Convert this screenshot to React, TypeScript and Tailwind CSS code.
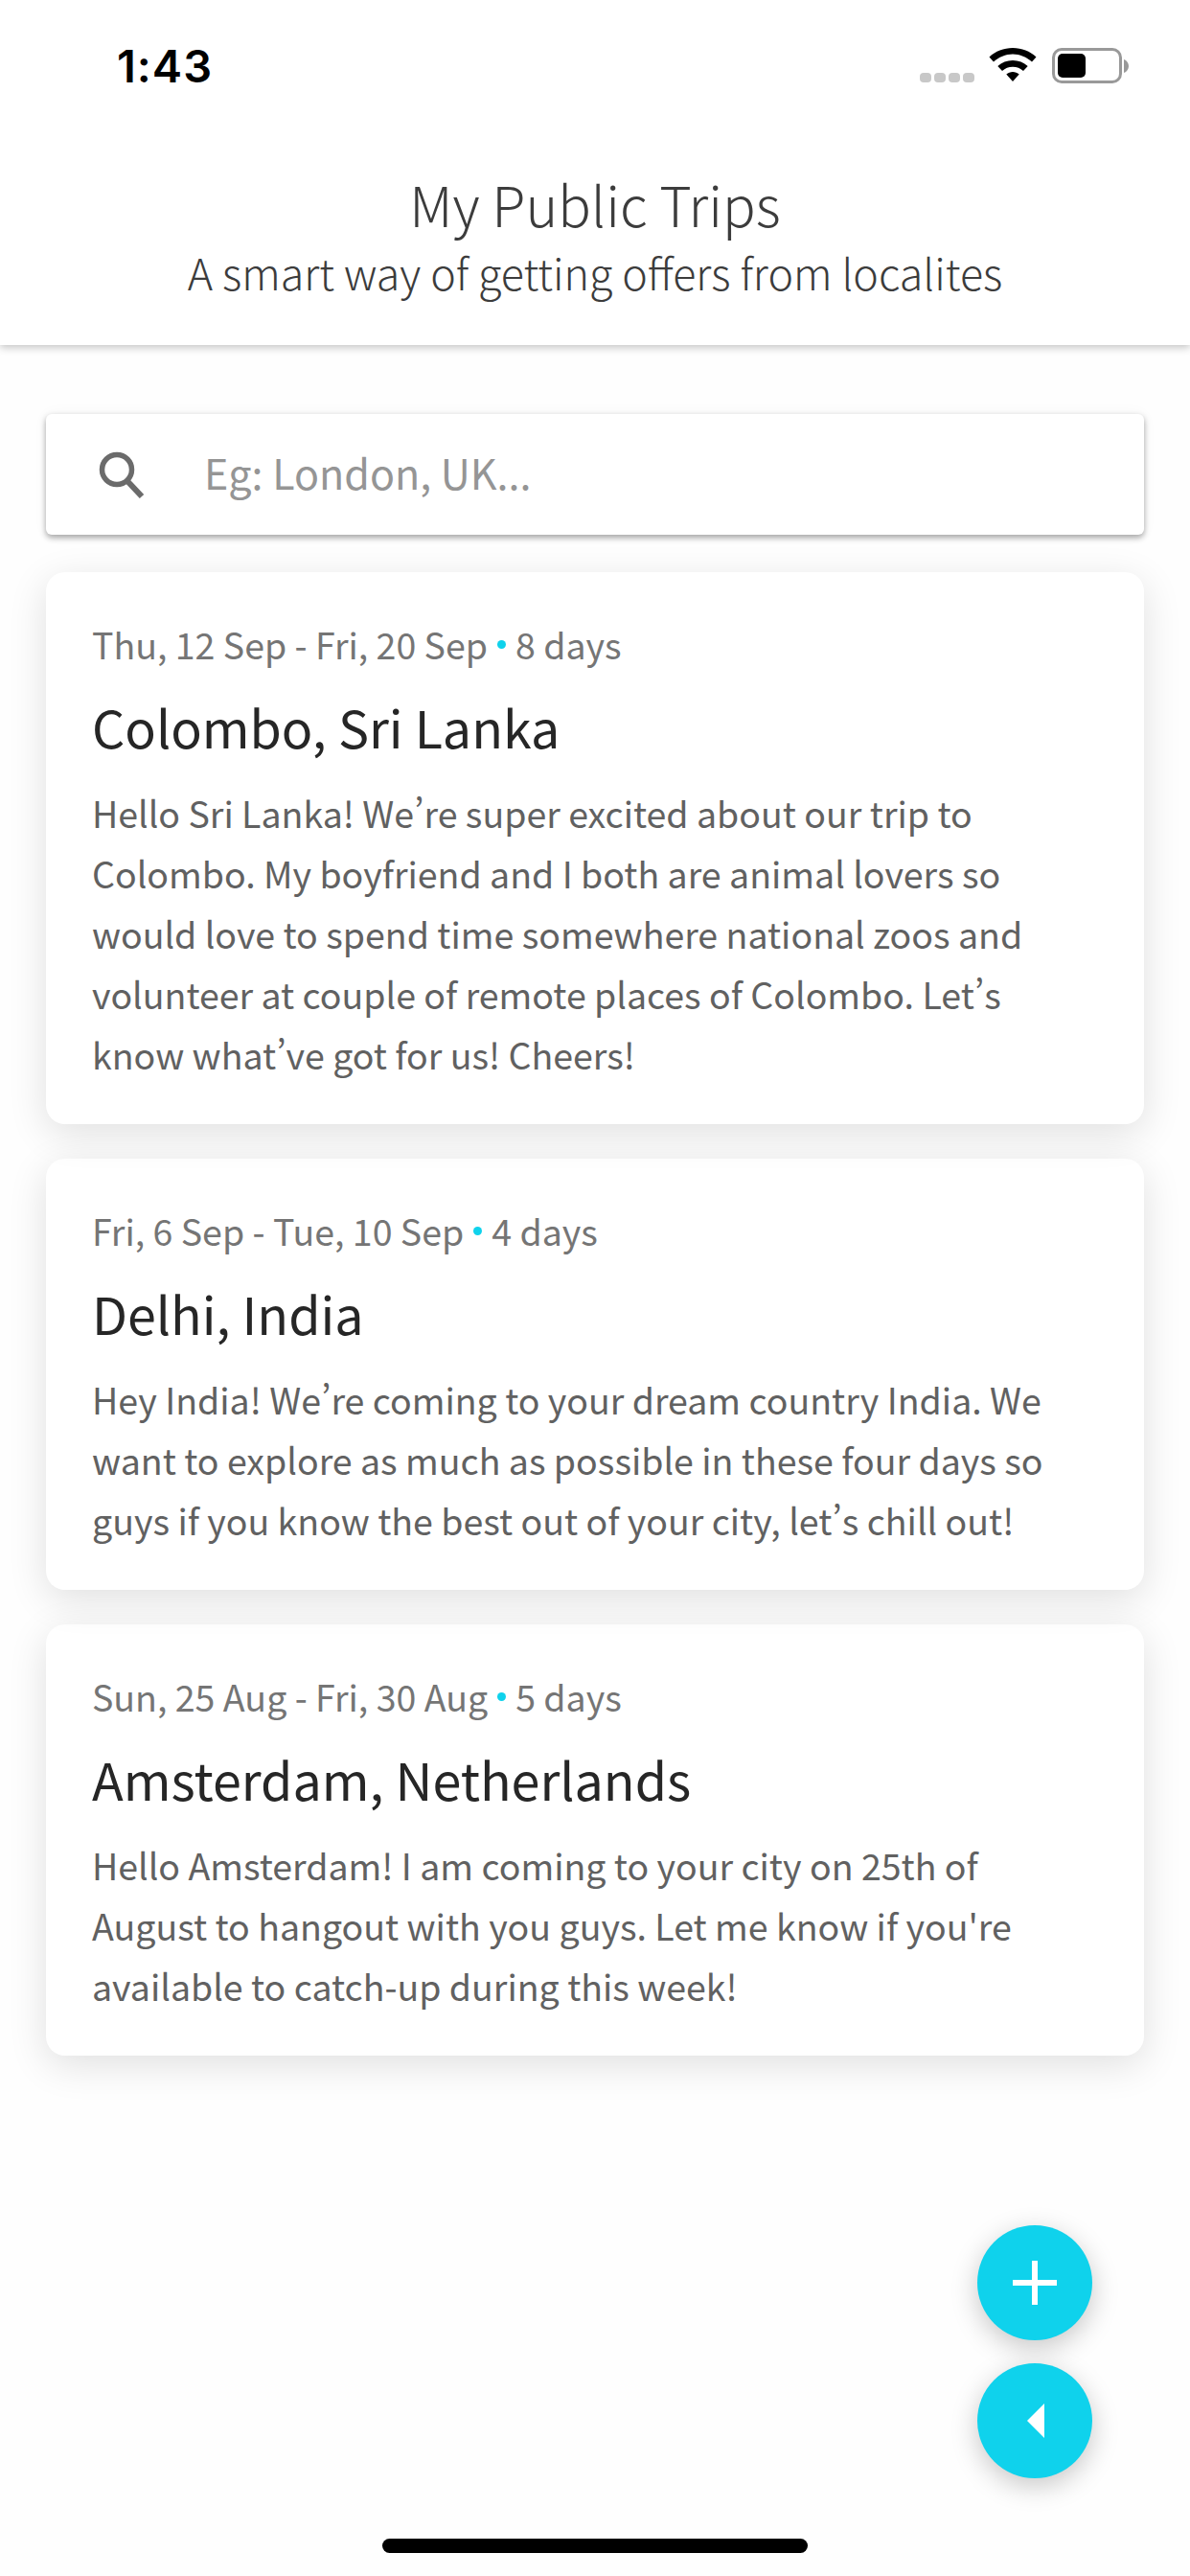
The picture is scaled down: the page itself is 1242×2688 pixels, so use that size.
const font = { fontFamily: '"Noto Sans CJK SC", "Noto Sans", sans-serif' };

type Trip = { dates: string; days: string; title: string; z: string; lines: string[] };

const trips: Trip[] = [
  {
    dates: "Thu, 12 Sep - Fri, 20 Sep",
    days: "8 days",
    title: "Colombo, Sri Lanka",
    z: "z-20",
    lines: [
      "Hello Sri Lanka! We’re super excited about our trip to",
      "Colombo. My boyfriend and I both are animal lovers so",
      "would love to spend time somewhere national zoos and",
      "volunteer at couple of remote places of Colombo. Let’s",
      "know what’ve got for us! Cheers!",
    ],
  },
  {
    dates: "Fri, 6 Sep - Tue, 10 Sep",
    days: "4 days",
    title: "Delhi, India",
    z: "z-10",
    lines: [
      "Hey India! We’re coming to your dream country India. We",
      "want to explore as much as possible in these four days so",
      "guys if you know the best out of your city, let’s chill out!",
    ],
  },
  {
    dates: "Sun, 25 Aug - Fri, 30 Aug",
    days: "5 days",
    title: "Amsterdam, Netherlands",
    z: "z-0",
    lines: [
      "Hello Amsterdam! I am coming to your city on 25th of",
      "August to hangout with you guys. Let me know if you're",
      "available to catch-up during this week!",
    ],
  },
];

function Card({ trip }: { trip: Trip }) {
  return (
    <div className={`${trip.z} relative rounded-[20px] bg-white px-[48px] pt-[50px] pb-[42px] shadow-[0_10px_40px_rgba(0,0,0,0.12)]`}>
      <div className="flex items-center h-[50px] text-[37.5px] leading-[50px] text-[#757575]">
        <span>{trip.dates}</span>
        <span className="mx-[10px] h-[9px] w-[9px] rounded-full bg-[#0fd2ec]" />
        <span>{trip.days}</span>
      </div>
      <div className="mt-[26px] h-[70px] text-[53.8px] leading-[70px] text-[#262626]">{trip.title}</div>
      <div className="mt-[23px] text-[37.5px] leading-[63px] text-[#616161] [font-feature-settings:'pwid']">
        {trip.lines.map((l) => (
          <div key={l} className="whitespace-nowrap">{l}</div>
        ))}
      </div>
    </div>
  );
}

export default function App() {
  return (
    <div style={font} className="relative h-[2688px] w-[1242px] overflow-hidden bg-[#fefefe]">
      <header className="relative z-40 h-[360px] bg-white shadow-[0_3px_8px_rgba(0,0,0,0.22)]">
        <div className="flex h-[134px] items-start justify-between pt-[41px] pl-[122px] pr-[64px]">
          <span style={{ fontFamily: 'Inter, sans-serif' }} className="text-[47px] font-semibold leading-[56px] tracking-[1px] text-black">1:43</span>
          <div className="flex items-start pt-[9px]">
            <div className="mt-[26px] flex gap-[3px]">
              <span className="h-[10px] w-[12px] rounded-[4px] bg-[#c8c8c8]" />
              <span className="h-[10px] w-[12px] rounded-[4px] bg-[#c8c8c8]" />
              <span className="h-[10px] w-[12px] rounded-[4px] bg-[#c8c8c8]" />
              <span className="h-[10px] w-[12px] rounded-[4px] bg-[#c8c8c8]" />
            </div>
            <svg className="ml-[15px]" width="50" height="36" viewBox="0 0 50 36">
              <path d="M25 0C15.5 0 7 3.5 0.5 9.5L5 14.5C10.5 9.5 17.5 6.5 25 6.5S39.5 9.5 45 14.5L49.5 9.5C43 3.5 34.500 0 25 0Z" fill="#000" />
              <path d="M25 13C19 13 13.500 15.200 9.300 19L14 24C17 21.300 20.800 19.800 25 19.800S33 21.300 36 24L40.700 19C36.500 15.200 31 13 25 13Z" fill="#000" />
              <path d="M25 25C22.500 25 20.200 25.900 18.300 27.500L25 35L31.700 27.500C29.800 25.900 27.500 25 25 25Z" fill="#000" />
            </svg>
            <div className="ml-[16px] flex items-center">
              <div className="h-[37px] w-[73px] rounded-[10px] border-[3px] border-[#999999] p-[3px] pr-0">
                <div className="h-full w-[29px] rounded-[5px] bg-black" />
              </div>
              <svg className="ml-[2px]" width="5" height="14" viewBox="0 0 5 14">
                <path d="M0 0C3 1 5 4 5 7S3 13 0 14Z" fill="#999999" />
              </svg>
            </div>
          </div>
        </div>
        <div className="mt-[42px] text-center text-[57.4px] font-light leading-[72px] text-[#3c3c3c]">My Public Trips</div>
        <div className="mt-[6px] text-center text-[44.8px] font-light leading-[60px] text-[#3c3c3c] [font-feature-settings:'pwid']">A smart way of getting offers from localites</div>
      </header>

      <main className="flex flex-col gap-[36px] px-[48px] pt-[72px]">
        <div className="relative z-30 mb-[3px] flex h-[126px] items-center rounded-[6px] bg-white pl-[54px] shadow-[0_3px_6px_rgba(0,0,0,0.35),0_0_16px_rgba(0,0,0,0.04)]">
          <svg width="50" height="50" viewBox="0 0 50 50" fill="none" stroke="#6b6b6b">
            <circle cx="20" cy="20" r="15.500" strokeWidth="5.500" />
            <path d="M30 31L46 48" strokeWidth="6" />
          </svg>
          <span className="mb-[6px] ml-[61px] text-[43px] text-[#959595]">Eg: London, UK...</span>
        </div>
        {trips.map((t) => (
          <Card key={t.title} trip={t} />
        ))}
      </main>

      <div className="absolute z-50 left-[1020px] top-[2322px] flex h-[120px] w-[120px] items-center justify-center rounded-full bg-[#0fd2ec] shadow-[0_8px_28px_rgba(0,0,0,0.22)]">
        <svg width="46" height="46" viewBox="0 0 46 46" fill="#fff">
          <rect x="20" y="0" width="6" height="46" />
          <rect x="0" y="20" width="46" height="6" />
        </svg>
      </div>
      <div className="absolute z-50 left-[1020px] top-[2466px] flex h-[120px] w-[120px] items-center justify-center rounded-full bg-[#0fd2ec] shadow-[0_8px_28px_rgba(0,0,0,0.22)]">
        <svg className="relative left-[1px]" width="18" height="36" viewBox="0 0 18 36" fill="#fff">
          <path d="M18 0V36L0 18Z" />
        </svg>
      </div>
      <div className="absolute z-50 left-[399px] top-[2649px] h-[15px] w-[444px] rounded-[8px] bg-black" />
    </div>
  );
}
